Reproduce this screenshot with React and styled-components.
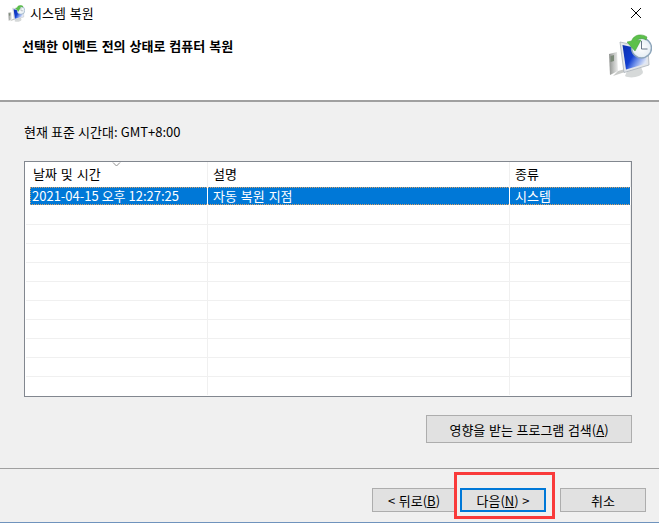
import React from "react";
import styled, { createGlobalStyle } from "styled-components";

const GlobalStyle = createGlobalStyle`
  html, body {
    margin: 0;
    padding: 0;
    background: #f0f0f0;
    overflow: hidden;
  }
  body {
    font-family: "Noto Sans CJK KR", "Noto Sans", sans-serif;
    font-size: 13px;
    color: #000;
  }
`;

const Dialog = styled.div`
  width: 659px;
  height: 523px;
  display: flex;
  flex-direction: column;
  box-sizing: border-box;
  border-bottom: 1px solid #6f93bd;
  background: #f0f0f0;
`;

const Header = styled.header`
  height: 102px;
  box-sizing: border-box;
  background: #fff;
  border-bottom: 2px solid #a0a0a0;
  display: flex;
  flex-direction: column;
  flex-shrink: 0;
`;

const TitleBar = styled.div`
  height: 26px;
  display: flex;
  align-items: center;
  padding-left: 8px;
  gap: 5px;
`;

const TitleText = styled.span`
  flex: 1;
  line-height: 26px;
  word-spacing: 1px;
`;

const CloseButton = styled.div`
  width: 46px;
  height: 26px;
  display: flex;
  align-items: center;
  justify-content: center;
`;

const Banner = styled.div`
  flex: 1;
  display: flex;
  justify-content: space-between;
  padding: 8px 7px 0 22px;
`;

const Heading = styled.h1`
  margin: 2px 0 0;
  font-size: 13px;
  font-weight: 700;
  line-height: 20px;
  word-spacing: 1px;
`;

const Content = styled.main`
  flex: 1;
  padding: 21px 27px 0 24px;
  display: flex;
  flex-direction: column;
`;

const TimeZone = styled.div`
  height: 18px;
  line-height: 18px;
  word-spacing: 0.2px;
  margin-bottom: 20px;
`;

const ListView = styled.div`
  height: 236px;
  box-sizing: border-box;
  border: 1px solid #82878f;
  background: #fff;
  padding-left: 1px;
  overflow: hidden;
`;

const Row = styled.div`
  display: grid;
  grid-template-columns: 178px 302px 121px;
  margin-left: 4px;
  height: ${(p) => p.$height}px;
  box-sizing: border-box;
`;

const SelectedRow = styled(Row)`
  background: #0078d7;
  color: #fff;
  outline: 1px dotted #d9a066;
  outline-offset: -1px;
`;

const EmptyRow = styled(Row)`
  grid-template-columns: 182px 302px 121px;
  margin-left: 0;
  border-bottom: ${(p) => (p.$last ? "0" : "1px solid #f0f0f0")};
`;

const Cell = styled.div`
  position: relative;
  box-sizing: border-box;
  padding-left: ${(p) => (p.$first ? 2 : 5)}px;
  border-right: 1px solid ${(p) => (p.$selected ? "#fff" : "#f0f0f0")};
  line-height: 18px;
  word-spacing: ${(p) => (p.$first ? 0 : 1)}px;
  white-space: nowrap;
`;

const HeadCell = styled(Cell)`
  line-height: 24px;
  padding-left: ${(p) => (p.$first ? 3 : 5)}px;
  word-spacing: 1px;
`;

const SortArrow = styled.svg`
  position: absolute;
  top: 0;
  left: 82px;
`;

const ActionRow = styled.div`
  display: flex;
  justify-content: flex-end;
  margin-top: 18px;
`;

const Button = styled.button`
  box-sizing: border-box;
  height: ${(p) => (p.$tall ? 28 : 24)}px;
  width: ${(p) => p.$width}px;
  padding: 0;
  background: #e1e1e1;
  border: ${(p) => (p.$focused ? "2px solid #0078d7" : "1px solid #adadad")};
  font-family: inherit;
  font-size: 13px;
  color: #000;
  word-spacing: 0.7px;
  white-space: nowrap;
`;

const Footer = styled.footer`
  height: 54px;
  box-sizing: border-box;
  flex-shrink: 0;
  border-top: 1px solid #a0a0a0;
  display: flex;
  justify-content: flex-end;
  align-items: flex-start;
  padding: 19px 13px 0 0;
  gap: 14px;
`;

const WizardButtons = styled.div`
  display: flex;
  gap: 4px;
`;

const Highlighted = styled.div`
  position: relative;
  display: flex;
`;

const RedBox = styled.div`
  position: absolute;
  left: -6px;
  top: -16px;
  width: 101px;
  height: 47px;
  box-sizing: border-box;
  border: 3px solid #f93a3a;
  pointer-events: none;
`;

const Key = styled.u`
  text-underline-offset: 1px;
`;

function RestoreIcon({ size }) {
  return (
    <svg width={size} height={size} viewBox="0 0 44 44">
      <defs>
        <linearGradient id={`screen${size}`} x1="0" y1="0" x2="1" y2="0.6">
          <stop offset="0" stopColor="#0a2db0" />
          <stop offset="0.5" stopColor="#123fd0" />
          <stop offset="0.72" stopColor="#6f90ea" />
          <stop offset="1" stopColor="#dfe7f8" />
        </linearGradient>
        <linearGradient id={`tower${size}`} x1="0" y1="0" x2="1" y2="0">
          <stop offset="0" stopColor="#8f928f" />
          <stop offset="0.55" stopColor="#c4c6c4" />
          <stop offset="1" stopColor="#ececec" />
        </linearGradient>
        <radialGradient id={`clock${size}`} cx="0.5" cy="0.5" r="0.6">
          <stop offset="0" stopColor="#ffffff" />
          <stop offset="0.7" stopColor="#e9f0f6" />
          <stop offset="1" stopColor="#a9c1d6" />
        </radialGradient>
      </defs>
      <path d="M1 20 L9 18 L10 37 L2 41 Z" fill={`url(#tower${size})`} />
      <path d="M2.5 22 L6 21 L6 27 L2.5 28 Z" fill="#7c8a78" />
      <path d="M10 37 L17 35 L17 38 L5 42 Z" fill="#c9cbc9" />
      <path d="M19 37 L33 33 L35 38 C34 43 22 45 17 42 Z" fill="#d6d9d9" />
      <path d="M12 8 L40 14 L41 31 L16 38.5 Z" fill="#e3e6ea" stroke="#aab1b9" strokeWidth="0.8" />
      <path d="M14.5 11 L38 16 L38.5 29.5 L18 35.5 Z" fill={`url(#screen${size})`} />
      <circle cx="33.5" cy="14" r="10" fill={`url(#clock${size})`} stroke="#8da5ba" strokeWidth="1.4" />
      <path d="M33.5 7 V15 L39.5 15" fill="none" stroke="#56687a" strokeWidth="0.9" />
      <path
        d="M39 3 C34 -0.5 26 0 23.5 7 L19 8 L27 17 L33 6 L29 6.5 C31 4 35 4 38 6 Z"
        fill="#5cc04a"
        stroke="#3d9a33"
        strokeWidth="0.5"
      />
    </svg>
  );
}

const emptyRows = Array.from({ length: 8 }, (_, i) => i);

function App() {
  return (
    <Dialog>
      <GlobalStyle />
      <Header>
        <TitleBar>
          <RestoreIcon size={17} />
          <TitleText>시스템 복원</TitleText>
          <CloseButton>
            <svg width="12" height="12" viewBox="0 0 12 12">
              <path d="M1 1 L11 11 M11 1 L1 11" stroke="#000" strokeWidth="1" fill="none" />
            </svg>
          </CloseButton>
        </TitleBar>
        <Banner>
          <Heading>선택한 이벤트 전의 상태로 컴퓨터 복원</Heading>
          <RestoreIcon size={44} />
        </Banner>
      </Header>
      <Content>
        <TimeZone>현재 표준 시간대: GMT+8:00</TimeZone>
        <ListView>
          <Row $height={25}>
            <HeadCell $first>
              날짜 및 시간
              <SortArrow width="9" height="5" viewBox="0 0 9 5">
                <path d="M1 0.5 L4.5 4 L8 0.5" fill="none" stroke="#8f8f8f" />
              </SortArrow>
            </HeadCell>
            <HeadCell>설명</HeadCell>
            <HeadCell>종류</HeadCell>
          </Row>
          <SelectedRow $height={18}>
            <Cell $selected $first>2021-04-15 오후 12:27:25</Cell>
            <Cell $selected>자동 복원 지점</Cell>
            <Cell $selected>시스템</Cell>
          </SelectedRow>
          <EmptyRow $height={20}>
            <Cell />
            <Cell />
            <Cell />
          </EmptyRow>
          {emptyRows.map((i) => (
            <EmptyRow key={i} $height={19}>
              <Cell />
              <Cell />
              <Cell />
            </EmptyRow>
          ))}
          <EmptyRow $last $height={18}>
            <Cell />
            <Cell />
            <Cell />
          </EmptyRow>
        </ListView>
        <ActionRow>
          <Button $tall $width={206}>
            영향을 받는 프로그램 검색(<Key>A</Key>)
          </Button>
        </ActionRow>
      </Content>
      <Footer>
        <WizardButtons>
          <Button $width={84}>
            &lt; 뒤로(<Key>B</Key>)
          </Button>
          <Highlighted>
            <Button $focused $width={86}>
              다음(<Key>N</Key>) &gt;
            </Button>
            <RedBox />
          </Highlighted>
        </WizardButtons>
        <Button $width={86}>취소</Button>
      </Footer>
    </Dialog>
  );
}

export default App;
